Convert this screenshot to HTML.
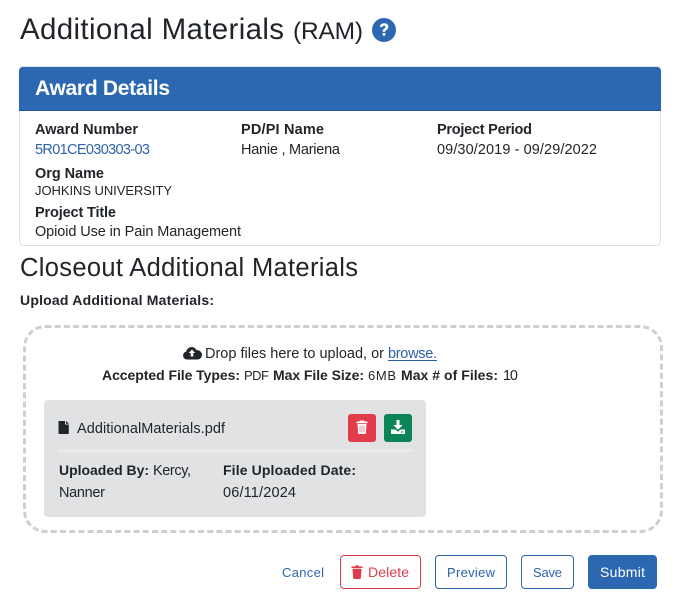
<!DOCTYPE html>
<html lang="en">
<head>
<meta charset="utf-8">
<title>Additional Materials (RAM)</title>
<style>
html,body{margin:0;padding:0;background:#fff;width:680px;height:598px;overflow:hidden}
svg{position:absolute;left:0;top:0;display:block}
text{font-family:"Liberation Sans",Arial,sans-serif;font-size:14.5px;fill:#212529}
.b{font-weight:700}
.s{font-size:14px}
.n{font-size:13px}
</style>
</head>
<body>
<svg width="680" height="598" viewBox="0 0 680 598" xmlns="http://www.w3.org/2000/svg">
<rect width="680" height="598" fill="#fff"/>

<text x="20" y="39" style="font-size:29.500px" textLength="264">Additional Materials</text>
<text x="293" y="39" style="font-size:24.500px" textLength="70">(RAM)</text>
<circle cx="384" cy="30" r="12" fill="#2b68b1"/>
<path d="M379.800 26.800c.3-2.400 2.100-3.600 4.400-3.600 2.400 0 4.200 1.400 4.200 3.500 0 3-3.100 3-3.100 5.100h-2.700c0-3.100 2.900-3.300 2.900-4.900 0-.8-.6-1.300-1.400-1.300-.9 0-1.500.6-1.700 1.500z" fill="#fff"/>
<rect x="382.600" y="33" width="2.800" height="2.800" rx=".5" fill="#fff"/>

<rect x="19.500" y="66.500" width="641" height="179" rx="4" fill="#fff" stroke="#dfdfdf"/>
<path d="M19 110.500V71a4 4 0 0 1 4-4h634a4 4 0 0 1 4 4v39.500z" fill="#2b68b1"/>
<rect x="19" y="110" width="642" height="1" fill="#22589b"/>
<text x="35" y="95" class="b" style="font-size:21px;fill:#fff" textLength="135">Award Details</text>

<text x="35" y="134" class="b" textLength="103">Award Number</text>
<text x="35" y="154" style="fill:#2f62a8" textLength="115">5R01CE030303-03</text>
<text x="241" y="134" class="b" textLength="83">PD/PI Name</text>
<text x="241" y="154" textLength="99">Hanie , Mariena</text>
<text x="437" y="134" class="b" textLength="95">Project Period</text>
<text x="437" y="154" textLength="160">09/30/2019 - 09/29/2022</text>
<text x="35" y="178" class="b" textLength="69">Org Name</text>
<text x="35" y="195" class="n" textLength="137">JOHKINS UNIVERSITY</text>
<text x="35" y="217" class="b" textLength="81">Project Title</text>
<text x="35" y="236" textLength="206">Opioid Use in Pain Management</text>

<text x="20" y="276" style="font-size:25.500px" textLength="338">Closeout Additional Materials</text>
<text x="20" y="305" class="b s" textLength="194">Upload Additional Materials:</text>

<rect x="24.500" y="326.500" width="637" height="205" rx="21" fill="none" stroke="#cfcfcf" stroke-width="3" stroke-dasharray="6 3.200"/>

<path d="M187 359.500a4 4 0 0 1-.8-7.900 5.500 5.500 0 0 1 10.400-1.400 4.700 4.700 0 0 1 1.400 9.300z" fill="#212529"/>
<path d="M192 349.500l3.300 3.500h-2v3.500h-2.600V353h-2z" fill="#fff"/>
<text x="205" y="358" textLength="179">Drop files here to upload, or</text>
<text x="388" y="358" style="fill:#2b5fa8" textLength="49">browse.</text>
<rect x="388" y="360" width="49" height="1" fill="#2b5fa8"/>

<text x="102" y="380" class="b s" textLength="138">Accepted File Types:</text>
<text x="244" y="380" class="n" textLength="25">PDF</text>
<text x="273" y="380" class="b s" textLength="91">Max File Size:</text>
<text x="368" y="380" class="n" textLength="28">6MB</text>
<text x="401" y="380" class="b s" textLength="97">Max # of Files:</text>
<text x="503" y="380" textLength="15">10</text>

<rect x="44" y="400" width="382" height="117" rx="4" fill="#e1e2e4"/>
<path d="M58.500 421h6.500v3.500h3.800V433a1 1 0 0 1-1 1H59.500a1 1 0 0 1-1-1z" fill="#212529"/>
<path d="M66 421l3 2.700h-3z" fill="#212529"/>
<text x="77" y="433" textLength="148">AdditionalMaterials.pdf</text>

<rect x="348" y="414" width="28" height="28" rx="3" fill="#e03c4a"/>
<path d="M356.500 421.500h3l.5-1h4l.5 1h3v1.800h-11z" fill="#fff"/>
<path d="M357.500 424h9l-.6 9.200a1 1 0 0 1-1 .8h-5.800a1 1 0 0 1-1-.8z" fill="#fff"/>
<path d="M360 425.500v7M362 425.500v7M364 425.500v7" stroke="#e88d95" stroke-width=".9"/>
<rect x="384" y="414" width="28" height="28" rx="3" fill="#0b8457"/>
<path d="M396.500 420h3v5h3.200l-4.700 4.800-4.700-4.800h3.200z" fill="#fff"/>
<path d="M391 429.500h4.500l2.500 2.300 2.500-2.300h4.500v4.500h-14z" fill="#fff"/>
<rect x="401" y="431.500" width="2.500" height="1" fill="#0b8457"/>

<rect x="58" y="449" width="354" height="3" fill="#e9eaec"/>

<text x="59" y="475" class="b s" textLength="90">Uploaded By:</text>
<text x="153" y="475" textLength="38">Kercy,</text>
<text x="223" y="475" class="b s" textLength="133">File Uploaded Date:</text>
<text x="59" y="497" textLength="46">Nanner</text>
<text x="223" y="497" textLength="73">06/11/2024</text>

<text x="282" y="577" class="n" style="fill:#2b68b1" textLength="42">Cancel</text>

<rect x="340.500" y="555.500" width="80" height="33" rx="3.500" fill="#fff" stroke="#e03c4a"/>
<path d="M351.500 566.500h3.500l.7-1.200h2.600l.7 1.200h3.500v1.500h-11z" fill="#e03c4a"/>
<path d="M352.500 568.700h9l-.7 9.300a1 1 0 0 1-1 1h-5.600a1 1 0 0 1-1-1z" fill="#e03c4a"/>
<text x="368" y="577" style="fill:#e03c4a;font-size:14px" textLength="41">Delete</text>

<rect x="435.500" y="555.500" width="71" height="33" rx="3.500" fill="#fff" stroke="#2b68b1"/>
<text x="447" y="577" class="n" style="fill:#2f62a8" textLength="48">Preview</text>

<rect x="521.500" y="555.500" width="52" height="33" rx="3.500" fill="#fff" stroke="#2b68b1"/>
<text x="533" y="577" class="n" style="fill:#2f62a8" textLength="29">Save</text>

<rect x="588" y="555" width="69" height="34" rx="4" fill="#2b68b1"/>
<text x="600" y="577" style="fill:#fff;font-size:14px" textLength="45">Submit</text>
</svg>
</body>
</html>
